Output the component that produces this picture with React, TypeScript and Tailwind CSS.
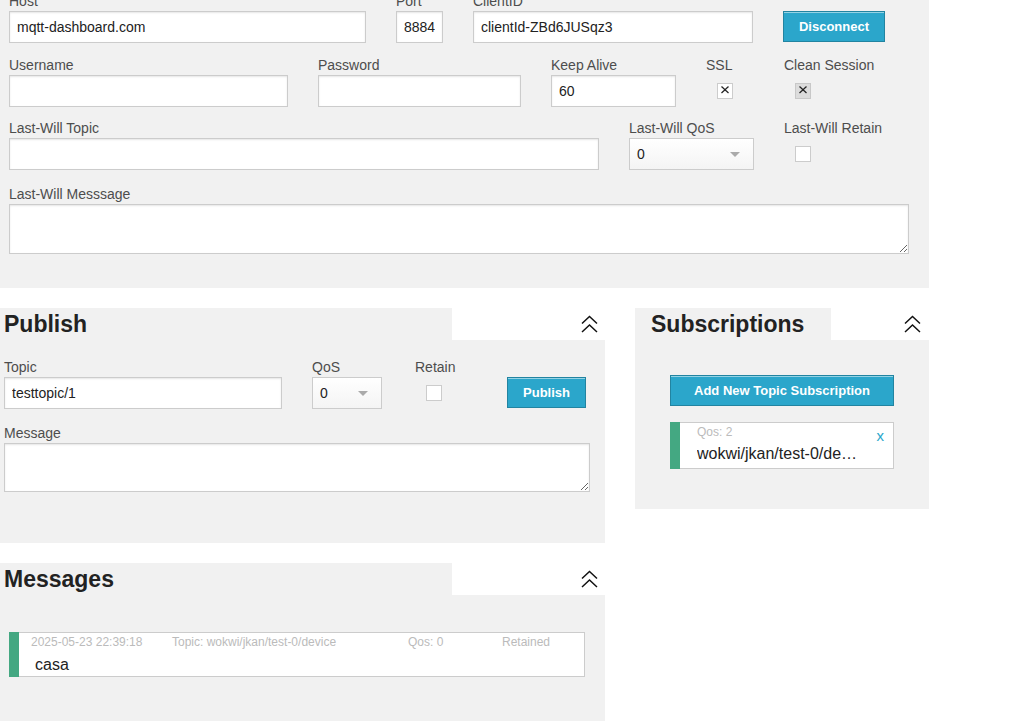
import React from "react";

const Chevron = () => (
  <svg width="17" height="18" viewBox="0 0 17 18" fill="none" stroke="#111" strokeWidth="1.5">
    <polyline points="1,8.5 8.5,1.5 16,8.5" />
    <polyline points="1,17 8.5,10 16,17" />
  </svg>
);

const Label = ({ children }: { children?: React.ReactNode }) => (
  <label className="block h-5 whitespace-nowrap text-[14px] leading-5 text-[#4d4d4d]">{children}</label>
);

const TextInput = ({ value, className }: { value?: string; className: string }) => (
  <input
    defaultValue={value}
    className={
      "h-8 border border-[#ccc] bg-white px-[7px] text-[14px] text-[#222] shadow-[inset_0_1px_2px_rgba(0,0,0,0.1)] outline-none " +
      className
    }
  />
);

const Select = ({ className }: { className: string }) => (
  <div
    className={
      "flex h-8 items-center justify-between border border-[#ccc] bg-linear-to-b from-white to-[#f4f4f4] pl-[7px] pr-[13px] text-[14px] text-[#222] " +
      className
    }
  >
    <span>0</span>
    <span className="h-0 w-0 border-x-[5px] border-t-[5px] border-x-transparent border-t-[#aaa]" />
  </div>
);

const Check = ({ checked, gray }: { checked?: boolean; gray?: boolean }) => (
  <div className={gray ? "h-4 w-4 border border-[#c8c8c8] bg-[#dcdcdc]" : "h-4 w-4 border border-[#ccc] bg-white"}>
    {checked && (
      <svg width="14" height="14" viewBox="0 0 14 14" stroke="#222" strokeWidth="1.2">
        <line x1="3.5" y1="2.5" x2="10.5" y2="9" />
        <line x1="10.5" y1="2.5" x2="3.5" y2="9" />
      </svg>
    )}
  </div>
);

const Button = ({ children }: { children: React.ReactNode }) => (
  <button className="h-[31px] w-full whitespace-nowrap border border-[#2284a1] bg-[#2ba6cb] text-[13px] font-bold text-white shadow-[inset_0_1px_0_rgba(255,255,255,0.5)]">
    {children}
  </button>
);

const PanelHeader = ({ title, grayW, padL, padR }: { title: string; grayW: string; padL: string; padR: string }) => (
  <div className="flex h-8">
    <div className={"bg-[#f1f1f1] " + grayW + " " + padL}>
      <h2 className="text-[23px] font-bold leading-8 text-[#222]">{title}</h2>
    </div>
    <div className={"flex flex-1 items-center justify-end bg-white " + padR}>
      <Chevron />
    </div>
  </div>
);

export default function App() {
  return (
    <div className="h-[721px] w-[1018px] overflow-hidden bg-white font-['Liberation_Sans',Arial,sans-serif]">
      {/* Connection settings */}
      <section className="-mt-[9px] w-[929px] bg-[#f1f1f1] pb-[34px] pl-[9px]">
        <div className="flex gap-[30px]">
          <div className="w-[357px]">
            <Label>Host</Label>
            <TextInput value="mqtt-dashboard.com" className="w-full" />
          </div>
          <div className="w-[47px]">
            <Label>Port</Label>
            <TextInput value="8884" className="w-full" />
          </div>
          <div className="w-[280px]">
            <Label>ClientID</Label>
            <TextInput value="clientId-ZBd6JUSqz3" className="w-full" />
          </div>
          <div className="w-[102px] pt-5">
            <Button>Disconnect</Button>
          </div>
        </div>

        <div className="mt-[12px] flex gap-[30px]">
          <div className="w-[279px]">
            <Label>Username</Label>
            <TextInput className="w-full" />
          </div>
          <div className="w-[203px]">
            <Label>Password</Label>
            <TextInput className="w-full" />
          </div>
          <div className="w-[125px]">
            <Label>Keep Alive</Label>
            <TextInput value="60" className="w-full" />
          </div>
          <div className="w-[48px]">
            <Label>SSL</Label>
            <div className="flex h-8 items-center pl-[11px]">
              <Check checked />
            </div>
          </div>
          <div className="w-[110px]">
            <Label>Clean Session</Label>
            <div className="flex h-8 items-center pl-[11px]">
              <Check checked gray />
            </div>
          </div>
        </div>

        <div className="mt-[11px] flex gap-[30px]">
          <div className="w-[590px]">
            <Label>Last-Will Topic</Label>
            <TextInput className="w-full" />
          </div>
          <div className="w-[125px]">
            <Label>Last-Will QoS</Label>
            <Select className="w-full" />
          </div>
          <div className="w-[110px]">
            <Label>Last-Will Retain</Label>
            <div className="flex h-8 items-center pl-[11px]">
              <Check />
            </div>
          </div>
        </div>

        <div className="mt-[14px]">
          <Label>Last-Will Messsage</Label>
          <textarea className="block h-[50px] w-[900px] border border-[#ccc] bg-white px-[7px] text-[14px] shadow-[inset_0_1px_2px_rgba(0,0,0,0.1)] outline-none" />
        </div>
      </section>

      <div className="mt-[20px] flex items-start">
        <div className="w-[605px]">
          {/* Publish */}
          <PanelHeader title="Publish" grayW="w-[452px]" padL="pl-[4px]" padR="pr-[7px]" />
          <div className="h-[203px] bg-[#f1f1f1] px-[4px] pt-[17px]">
            <div className="flex">
              <div className="w-[278px]">
                <Label>Topic</Label>
                <TextInput value="testtopic/1" className="w-full" />
              </div>
              <div className="ml-[30px] w-[70px]">
                <Label>QoS</Label>
                <Select className="w-full" />
              </div>
              <div className="ml-[33px] w-[62px]">
                <Label>Retain</Label>
                <div className="flex h-8 items-center pl-[11px]">
                  <Check />
                </div>
              </div>
              <div className="ml-[30px] w-[79px] pt-5">
                <Button>Publish</Button>
              </div>
            </div>
            <div className="mt-[14px]">
              <Label>Message</Label>
              <textarea className="block h-[49px] w-[586px] border border-[#ccc] bg-white px-[7px] text-[14px] shadow-[inset_0_1px_2px_rgba(0,0,0,0.1)] outline-none" />
            </div>
          </div>

          {/* Messages */}
          <div className="mt-[20px]">
            <PanelHeader title="Messages" grayW="w-[452px]" padL="pl-[4px]" padR="pr-[7px]" />
            <div className="h-[140px] bg-[#f1f1f1] pl-[9px] pt-[37px]">
              <div className="flex h-[45px] w-[576px]">
                <div className="w-[10px] bg-[#44a882]" />
                <div className="flex-1 border-y border-r border-[#ccc] bg-white">
                  <div className="flex pl-[12px] pt-[1px] text-[12px] leading-4 text-[#bbb]">
                    <span className="w-[141px]">2025-05-23 22:39:18</span>
                    <span className="w-[236px]">Topic: wokwi/jkan/test-0/device</span>
                    <span className="w-[94px]">Qos: 0</span>
                    <span>Retained</span>
                  </div>
                  <div className="mt-[4px] pl-[16px] text-[16px] leading-[22px] text-[#222]">casa</div>
                </div>
              </div>
            </div>
          </div>
        </div>

        {/* Subscriptions */}
        <div className="ml-[30px] w-[294px]">
          <PanelHeader title="Subscriptions" grayW="w-[196px]" padL="pl-[16px]" padR="pr-[8px]" />
          <div className="bg-[#f1f1f1] px-[35px] pb-[40px] pt-[35px]">
            <Button>Add New Topic Subscription</Button>
            <div className="mt-[16px] flex h-[47px]">
              <div className="w-[10px] bg-[#44a882]" />
              <div className="relative flex-1 border-y border-r border-[#ccc] bg-white pl-[17px]">
                <div className="pt-[1px] text-[12px] leading-4 text-[#bbb]">Qos: 2</div>
                <div className="mt-[3px] w-[164px] truncate text-[16px] leading-[22px] text-[#222]">
                  wokwi/jkan/test-0/device
                </div>
                <span className="absolute right-[9px] top-[4px] text-[15px] leading-[18px] text-[#2ba6cb]">x</span>
              </div>
            </div>
          </div>
        </div>
      </div>
    </div>
  );
}
